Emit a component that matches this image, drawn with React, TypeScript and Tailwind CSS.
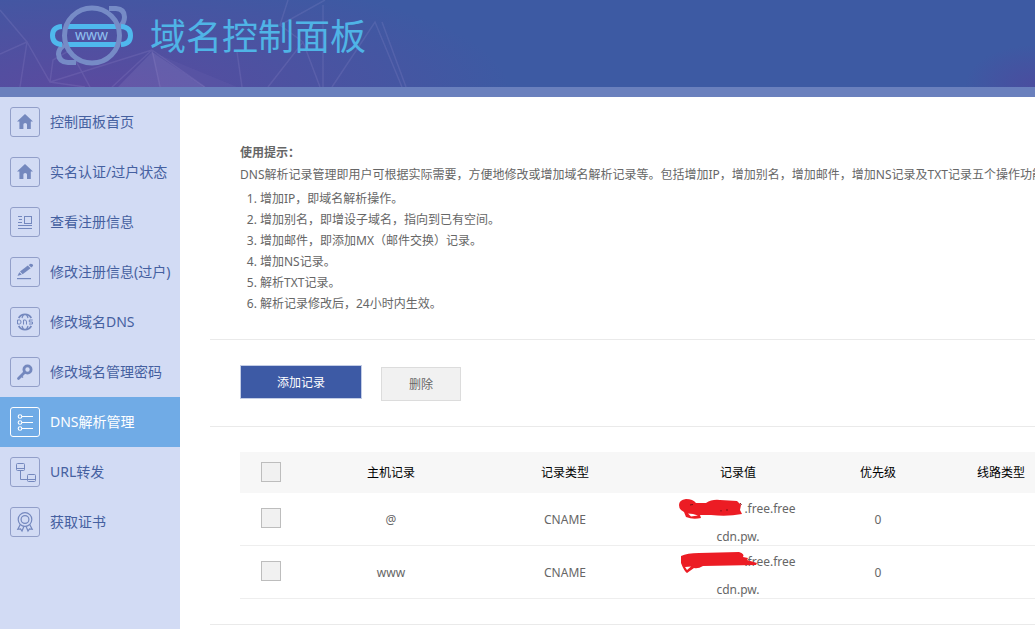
import React, { useState } from 'react';

const HomeIcon = () => (
  <path d="M15 7 L23 14.6 H20.8 V22 H17 V17.5 Q17 16 15.2 16 Q13.4 16 13.4 17.5 V22 H9.4 V14.6 H7 Z" fill="currentColor" />
);

const InfoIcon = () => (
  <g stroke="currentColor" strokeWidth="1" fill="none">
    <rect x="14.5" y="9.5" width="7" height="7" />
    <path d="M8 9.5h4M9 12.5h3M8 15.5h4M8 18.5h14M8 21.5h14" />
  </g>
);

const PencilIcon = () => (
  <g fill="currentColor">
    <path d="M7.5 19 L9.3 15.2 L11.8 17.6 Z" />
    <path d="M10 14.6 L17.8 8.6 L20.6 11.2 L12.6 17.2 Z" />
    <path d="M18.6 8 L20.5 6.8 Q23.6 7 23 9 L21.3 10.6 Z" />
    <rect x="7" y="21" width="14" height="1.2" />
  </g>
);

const DnsIcon = () => (
  <g stroke="currentColor" fill="none">
    <path d="M8.700 11 A7.300 7.300 0 0 1 21.300 11 M8.700 19 A7.300 7.300 0 0 0 21.300 19" strokeWidth="1.8" />
    <path d="M12 11 Q12.500 9 13.500 8 M18 11 Q17.500 9 16.500 8 M12 19 Q12.500 21 13.500 22 M18 19 Q17.500 21 16.500 22" strokeWidth="1.2" />
    <path d="M7.500 13 V17 H9.500 Q11 17 11 15 Q11 13 9.500 13 Z" strokeWidth="1" />
    <path d="M13.500 17.500 V13 H15 Q16.500 13 16.500 15 V17.500" strokeWidth="1" />
    <path d="M22.700 13 H19.300 V15 H22.500 V17 H19" strokeWidth="1" />
  </g>
);

const KeyIcon = () => (
  <g stroke="currentColor" fill="none">
    <circle cx="17.5" cy="12.5" r="3.6" strokeWidth="2.8" />
    <path d="M14.7 15.3 L8.5 21.5" strokeWidth="2.8" strokeLinecap="round" />
    <path d="M10.5 18.5 l2.5 2" strokeWidth="1.6" />
  </g>
);

const ListIcon = () => (
  <g stroke="currentColor" strokeWidth="1.1" fill="none">
    <circle cx="10" cy="9.5" r="1.8" />
    <circle cx="10" cy="15.5" r="1.8" />
    <circle cx="10" cy="21.5" r="1.8" />
    <path d="M12 9.5h11M12 15.5h11M12 21.5h11" />
  </g>
);

const ForwardIcon = () => (
  <g stroke="currentColor" strokeWidth="1" fill="none">
    <rect x="6.5" y="6.5" width="8" height="7" rx="1" />
    <path d="M6.5 11.5h8" />
    <path d="M10.5 13.5v9h7" />
    <rect x="17.5" y="17.5" width="8" height="7" rx="1" />
    <path d="M17.5 22.5h8" />
  </g>
);

const MedalIcon = () => (
  <g stroke="currentColor" strokeWidth="1.2" fill="none">
    <circle cx="15" cy="12.5" r="6.8" />
    <circle cx="15" cy="12.5" r="3.9" />
    <path d="M10.3 17.5 L7.8 22.3 L10.5 21.9 L12 24 L14 19.3 M19.7 17.5 L22.2 22.3 L19.5 21.9 L18 24 L16 19.3" />
  </g>
);

const menu = [
  { label: '控制面板首页', icon: <HomeIcon /> },
  { label: '实名认证/过户状态', icon: <HomeIcon /> },
  { label: '查看注册信息', icon: <InfoIcon /> },
  { label: '修改注册信息(过户)', icon: <PencilIcon /> },
  { label: '修改域名DNS', icon: <DnsIcon /> },
  { label: '修改域名管理密码', icon: <KeyIcon /> },
  { label: 'DNS解析管理', icon: <ListIcon />, active: true },
  { label: 'URL转发', icon: <ForwardIcon /> },
  { label: '获取证书', icon: <MedalIcon /> },
];

const tips = [
  '增加IP，即域名解析操作。',
  '增加别名，即增设子域名，指向到已有空间。',
  '增加邮件，即添加MX（邮件交换）记录。',
  '增加NS记录。',
  '解析TXT记录。',
  '解析记录修改后，24小时内生效。',
];

const records = [
  {
    host: '@',
    type: 'CNAME',
    priority: 0,
    mask: (
      <g>
        <path d="M0 6 Q0 1 7 0 Q14 0 17 4 L27 4 Q33 0 41 1 L58 2 L62 6 L61 11 L63 15 Q48 18 32 16 L21 16 L22 19 Q14 21 7 18 L5 13 Q0 11 0 6 Z" fill="#ec1c24" />
        <path d="M9 14.500 L14 15 L19 16.500 L12 17.500 Z" fill="#fff" />
        <path d="M61 4 l1.500 2 M48 10 v2 M42 11 v1.500 M11 6 l3 -0.500" stroke="#7a1015" />
      </g>
    ),
  },
  {
    host: 'www',
    type: 'CNAME',
    priority: 0,
    mask: (
      <path d="M2 4 Q8 1 20 1 L60 0 Q66 2 64 5 L69 6 L68 8 L78 11 L77 13 L24 14 Q19 17 15 16 L8 21 Q5 19 2 11 Z M6 15 L8 18 L12 14.500 Z" fill="#ec1c24" fillRule="evenodd" />
    ),
  },
];

const Logo = () => (
  <svg className="h-[64px] w-[84px] shrink-0" viewBox="50 4 84 64" fill="none" aria-hidden="true">
    <path d="M109 8.500 H116 Q124.500 9 124.500 17 Q124.500 22 120 27" stroke="#768bc6" strokeWidth="5" />
    <path d="M76 62.500 H68 Q59 62 58.500 54 Q58.500 49 64 45" stroke="#768bc6" strokeWidth="5" />
    <path d="M62 26.500 Q52.500 27 52.500 35.500 Q52.500 44 62 44.500" stroke="#4fb8ed" strokeWidth="5" />
    <path d="M121 26.500 Q130.500 27 130.500 35.500 Q130.500 44 121 44.500" stroke="#4fb8ed" strokeWidth="5" />
    <path d="M67 26.500 H117 M67 44.500 H117" stroke="#4fb8ed" strokeWidth="5" />
    <circle cx="92" cy="35.500" r="27.500" stroke="#768bc6" strokeWidth="5" />
    <text x="91.500" y="39.500" textAnchor="middle" fontSize="14" fontFamily="Noto Sans, sans-serif" fill="#8fc0f0">www</text>
  </svg>
);

const HeaderMesh = () => (
  <svg className="absolute left-0 top-0 h-full w-[480px] pointer-events-none" viewBox="0 0 480 87" preserveAspectRatio="xMinYMin slice">
    <path d="M152 52 L205 87 H118 Z" fill="rgba(190,180,230,0.12)" />
    <path d="M152 52 L237 87 H160 Z" fill="rgba(190,180,230,0.05)" />
    <path
      d="M0 54 L27 42 L0 10 M27 42 L20 87 M27 42 L50 82 L85 87 M50 82 L53 60 L70 50 L90 87 M50 82 L152 50 L112 87 M152 50 L160 87 M152 50 L205 87 M237 52 L242 87 M268 87 L303 42 L320 87 M303 42 L280 25 L325 0 M323 87 L323 5 M332 87 L375 22 L402 87 M382 22 L406 87 M280 25 L288 0"
      stroke="rgba(190,180,230,0.13)"
      strokeWidth="1.5"
      fill="none"
    />
  </svg>
);

const checkboxClass =
  'block mx-auto size-5 appearance-none border border-[#bdbdbd] bg-[#f1f1f1] checked:bg-[#3d5aa5]';

const cellClass = 'h-[53px] border-b border-[#eee] pt-0.5';

export default function App() {
  const [selected, setSelected] = useState<number[]>([]);

  const toggle = (i: number) =>
    setSelected((prev) => (prev.includes(i) ? prev.filter((n) => n !== i) : [...prev, i]));

  return (
    <div className="flex min-h-screen flex-col overflow-x-hidden bg-white font-['Noto_Sans','Noto_Sans_CJK_SC',sans-serif] text-xs text-[#666]">
      <header className="relative border-b-10 border-[#6a80bd] bg-[#3d5aa3] bg-[radial-gradient(ellipse_420px_120px_at_90px_90px,#5b4a9f,transparent),radial-gradient(ellipse_70px_40px_at_100%_85px,#4a4d9f,transparent)]">
        <HeaderMesh />
        <div className="relative flex h-[87px] items-start gap-4 pl-[50px] pt-1">
          <Logo />
          <h1 className="whitespace-nowrap text-4xl/[66px] font-normal text-[#4fb4e6]">域名控制面板</h1>
        </div>
      </header>

      <div className="flex flex-1">
        <nav className="w-[180px] shrink-0 bg-[#d2dbf4]">
          {menu.map((item) => (
            <a
              key={item.label}
              href="#"
              className={`flex h-[50px] items-center gap-[10px] pl-[10px] text-sm whitespace-nowrap ${item.active ? 'bg-[#70abe6] text-white' : 'text-[#4560a0]'}`}
            >
              <span className={`size-[30px] shrink-0 rounded-[3px] border ${item.active ? 'border-white text-white' : 'border-[#929fc9] text-[#7488be]'}`}>
                <svg className="size-7" viewBox="1 1 28 28" aria-hidden="true">
                  {item.icon}
                </svg>
              </span>
              {item.label}
            </a>
          ))}
        </nav>

        <main className="min-w-0 flex-1 overflow-hidden pl-[30px]">
          <section className="border-b border-[#eaeaea] pb-[25px] pl-[30px] pt-[45px]">
            <h2 className="text-xs/[22px] font-bold">使用提示：</h2>
            <p className="whitespace-nowrap text-xs/[22px]">
              DNS解析记录管理即用户可根据实际需要，方便地修改或增加域名解析记录等。包括增加IP，增加别名，增加邮件，增加NS记录及TXT记录五个操作功能。
            </p>
            <ol className="mt-0.5 list-decimal pl-5 text-xs/[21px]">
              {tips.map((tip) => (
                <li key={tip}>{tip}</li>
              ))}
            </ol>
          </section>

          <section className="flex items-start gap-[19px] border-b border-[#eaeaea] py-[25px] pl-[30px]">
            <button type="button" className="h-[34px] w-[122px] border border-[#c3cde6] bg-[#3d5aa5] pt-0.5 text-white">
              添加记录
            </button>
            <button type="button" className="mt-0.5 h-[34px] w-20 border border-[#dcdcdc] bg-[#f1f1f1] pt-0.5">
              删除
            </button>
          </section>

          <section className="border-b border-[#eaeaea] py-[25px] pl-[30px]">
            <table className="w-[832px] table-fixed border-separate border-spacing-0 text-center">
              <thead>
                <tr className="h-[41px] bg-[#f7f7f7] text-black">
                  <th className="w-[62px] pb-0.5">
                    <input
                      type="checkbox"
                      aria-label="全选"
                      className={checkboxClass}
                      checked={selected.length === records.length}
                      onChange={(e) => setSelected(e.target.checked ? records.map((_, i) => i) : [])}
                    />
                  </th>
                  <th className="w-[178px] font-normal">主机记录</th>
                  <th className="w-[170px] font-normal">记录类型</th>
                  <th className="w-[176px] font-normal">记录值</th>
                  <th className="w-[104px] font-normal">优先级</th>
                  <th className="font-normal">线路类型</th>
                </tr>
              </thead>
              <tbody>
                {records.map((record, i) => (
                  <tr key={record.host}>
                    <td className="h-[53px] border-b border-[#eee] pb-0.5">
                      <input
                        type="checkbox"
                        aria-label={record.host}
                        className={checkboxClass}
                        checked={selected.includes(i)}
                        onChange={() => toggle(i)}
                      />
                    </td>
                    <td className={cellClass}>{record.host}</td>
                    <td className={cellClass}>{record.type}</td>
                    <td className={cellClass}>
                      <div className="h-[50px] text-xs/7">
                        <span className="relative inline-block w-16">
                          &nbsp;
                          <svg className="absolute -left-px top-1 h-[22px] w-[78px]" viewBox="0 0 78 22" aria-hidden="true">
                            {record.mask}
                          </svg>
                        </span>
                        .free.free
                        <br />
                        cdn.pw.
                      </div>
                    </td>
                    <td className={cellClass}>{record.priority}</td>
                    <td className={cellClass}></td>
                  </tr>
                ))}
              </tbody>
            </table>
          </section>
        </main>
      </div>
    </div>
  );
}
